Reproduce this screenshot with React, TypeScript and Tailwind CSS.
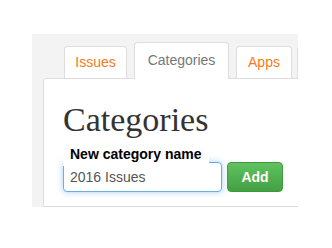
import { useState } from "react";

const sans = { fontFamily: '"Liberation Sans", Arial, sans-serif' };
const serif = { fontFamily: '"Liberation Serif", "Times New Roman", serif' };

const tabs = [
  { label: "Issues", width: "w-[63px]", active: false },
  { label: "Categories", width: "w-[95px]", active: true },
  { label: "Apps", width: "w-[56px]", active: false },
];

function Tab({ label, width, active }: { label: string; width: string; active: boolean }) {
  if (active) {
    return (
      <div
        className={`${width} relative z-10 h-[37px] shrink-0 rounded-t-[4px] border border-b-0 border-[#dddddd] bg-white pt-[7px] text-center text-[14px] leading-[20px] text-[#777777]`}
      >
        {label}
      </div>
    );
  }
  return (
    <div
      className={`${width} mb-[1px] h-[32px] shrink-0 rounded-t-[4px] border border-b-0 border-[#dddddd] bg-white pt-[5px] text-center text-[14px] leading-[20px] text-[#f47b20]`}
    >
      {label}
    </div>
  );
}

export default function App() {
  const [name, setName] = useState("2016 Issues");

  return (
    <div className="h-[248px] w-[332px] bg-white pl-[32px] pt-[34px]" style={sans}>
      <div className="flex h-[173px] w-[266px] flex-col overflow-hidden bg-[#f3f3f3]">
        <div className="flex items-end gap-[7px] pl-[32px] pt-[8px]">
          {tabs.map((t) => (
            <Tab key={t.label} {...t} />
          ))}
          <div className="-ml-[2px] mb-[1px] h-[32px] w-[40px] shrink-0 rounded-t-[4px] border border-b-0 border-[#dddddd] bg-white" />
        </div>

        <div className="-mt-[1px] ml-[11px] w-[300px] shrink-0 flex-1 rounded-tl-[3px] border border-[#dddddd] bg-white pl-[19px] pt-[21px]">
          <h1 className="h-[40px] text-[34px] leading-[40px] text-[#333333]" style={serif}>
            Categories
          </h1>

          <label className="relative z-10 mt-[4px] inline-block h-[22px] bg-white px-[7px] text-[14px] font-bold leading-[20px] text-black">
            New category name
          </label>

          <div className="-mt-[4px] flex gap-[5px]">
            <input
              value={name}
              onChange={(e) => setName(e.target.value)}
              className="h-[30px] w-[159px] rounded-[4px] border border-[#66afe9] bg-white px-[6px] text-[14px] text-[#555555] shadow-[0_0_6px_rgba(102,175,233,0.6)] outline-none"
              style={sans}
            />
            <button
              type="button"
              className="h-[30px] w-[56px] rounded-[4px] border border-[#3e9a3e] bg-gradient-to-b from-[#5fc25f] to-[#43a043] text-[14px] font-bold text-white"
              style={sans}
            >
              Add
            </button>
          </div>
        </div>
      </div>
    </div>
  );
}
